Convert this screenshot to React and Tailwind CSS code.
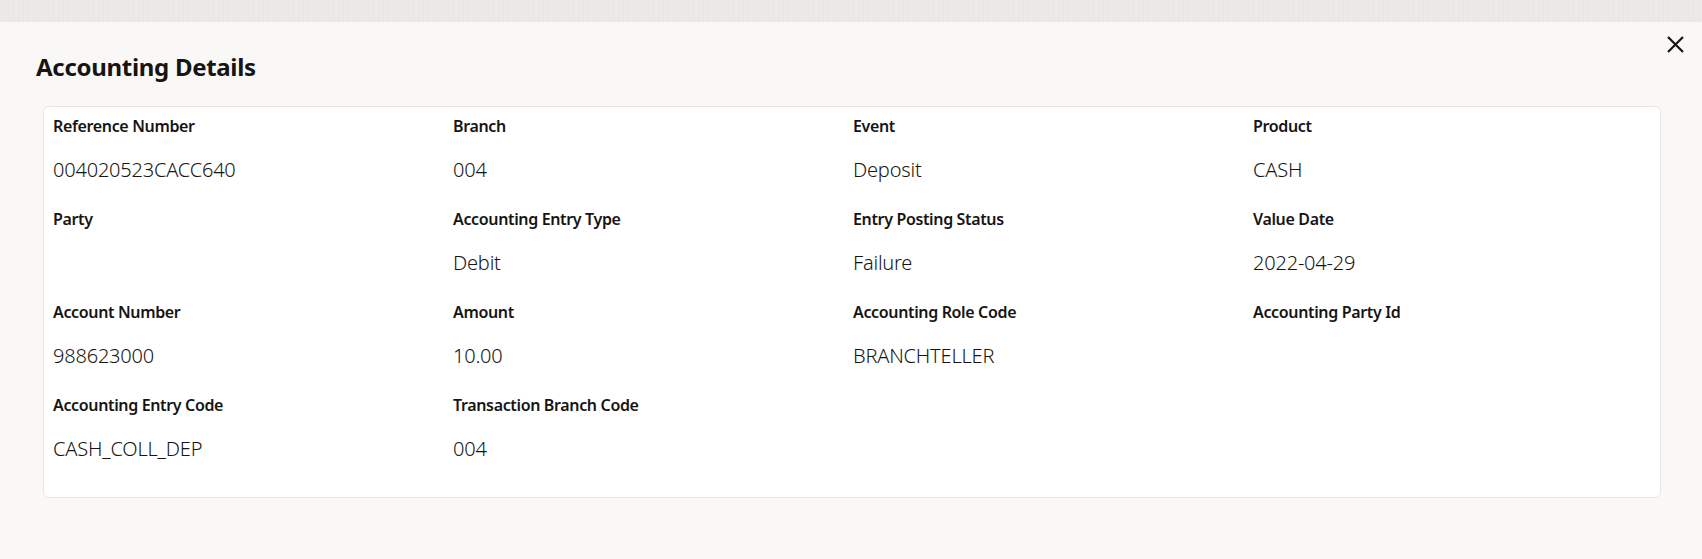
import React from 'react';

const fields = [
    ['Reference Number', '004020523CACC640'],
    ['Branch', '004'],
    ['Event', 'Deposit'],
    ['Product', 'CASH'],
    ['Party', ''],
    ['Accounting Entry Type', 'Debit'],
    ['Entry Posting Status', 'Failure'],
    ['Value Date', '2022-04-29'],
    ['Account Number', '988623000'],
    ['Amount', '10.00'],
    ['Accounting Role Code', 'BRANCHTELLER'],
    ['Accounting Party Id', ''],
    ['Accounting Entry Code', 'CASH_COLL_DEP'],
    ['Transaction Branch Code', '004'],
];

const App = () => {
    return (
        <div className="w-full h-[559px] flex flex-col bg-[#f9f8f6] overflow-hidden" style={{ fontFamily: '"Noto Sans", "Open Sans", sans-serif' }}>
            {/* textured page strip behind the dialog */}
            <div className="h-[22px] w-full bg-[#ebeae8] bg-[repeating-linear-gradient(90deg,#e6e5e3_0px,#efeeec_2px,#e4e3e1_3px,#f0efed_5px)]"></div>

            <div className="flex-1 relative px-[36px] pt-[29px]">
                <button className="absolute right-[15px] top-[10px] w-[24px] h-[24px] flex items-center justify-center text-[#161513]">
                    <svg width="17" height="17" viewBox="0 0 17 17" fill="none" stroke="currentColor" strokeWidth="2.2">
                        <path d="M1 1L16 16M16 1L1 16" />
                    </svg>
                </button>

                <h1 className="text-[24px] leading-[32px] font-bold tracking-[-0.3px] text-[#161513]">Accounting Details</h1>

                <div className="mt-[23px] ml-[7px] w-[1618px] bg-white border border-[#e7e6e4] rounded-[6px] pt-[7px] pl-[9px] pb-[34px]">
                    <div className="grid grid-cols-[repeat(4,400px)] gap-y-[23px]">
                        {fields.map(([label, value]) => (
                            <div key={label} className="flex flex-col">
                                <div className="text-[16px] leading-6 font-semibold tracking-[-0.35px] text-[#161513]">{label}</div>
                                <div className="mt-[18px] text-[20px] leading-7 min-h-[28px] tracking-[-0.2px] text-[#161513] font-light">{value}</div>
                            </div>
                        ))}
                    </div>
                </div>
            </div>
        </div>
    );
};

export default App;
